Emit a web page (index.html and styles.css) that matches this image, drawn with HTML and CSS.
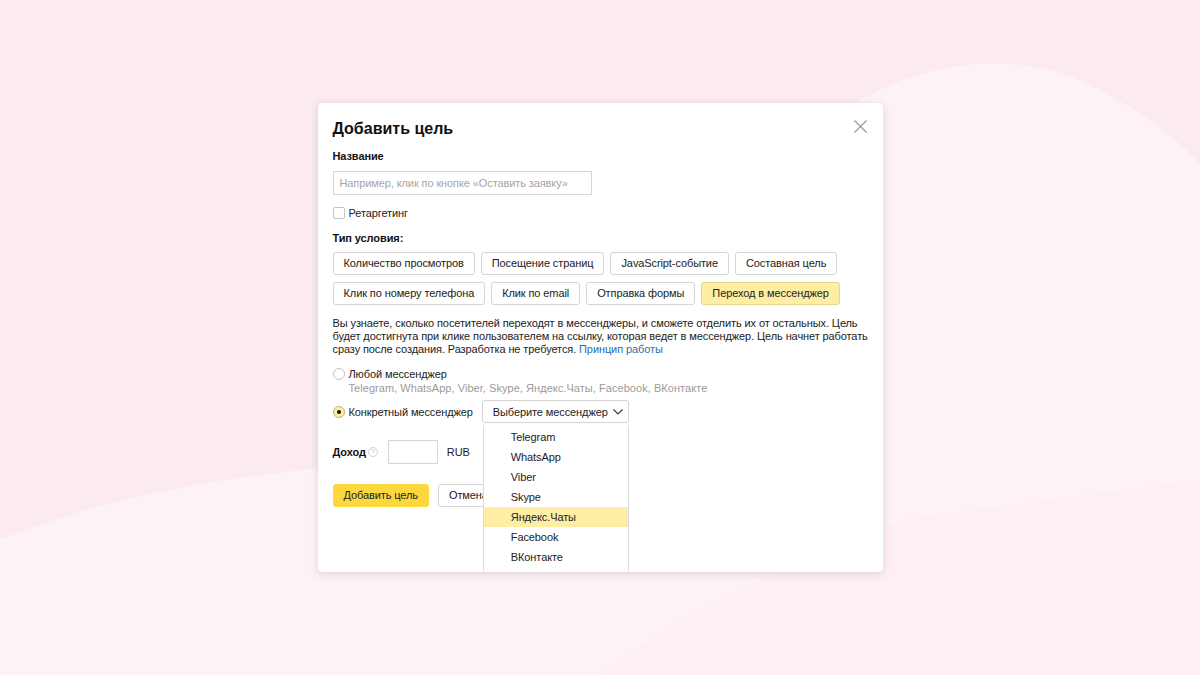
FILE: index.html
```html
<!DOCTYPE html>
<html lang="ru">
<head>
<meta charset="utf-8">
<title>Добавить цель</title>
<link rel="stylesheet" href="styles.css">
</head>
<body>
<svg class="bg" width="1200" height="675" viewBox="0 0 1200 675" xmlns="http://www.w3.org/2000/svg" aria-hidden="true">
  <rect width="1200" height="675" fill="#fbeaef"/>
  <path d="M0 540 C 120 490, 260 470, 420 460 L 1200 460 L 1200 675 L 0 675 Z" fill="#fdf2f5"/>
  <path d="M860 100 C 930 60, 1020 50, 1090 85 C 1140 110, 1180 140, 1200 165 L 1200 675 L 860 675 Z" fill="#fdf2f5"/>
  <path d="M600 675 C 700 600, 800 560, 900 520 L 1200 480 L 1200 675 Z" fill="#fdeff3"/>
</svg>
<div class="page">
  <div class="modal">
    <div class="head">
      <h1 class="title">Добавить цель</h1>
      <button class="close" aria-label="Закрыть">
        <svg width="13" height="13" viewBox="0 0 13 13"><path d="M0.5 0.5 L12.5 12.5 M12.5 0.5 L0.5 12.5" stroke="#9a9a9a" stroke-width="1.3" fill="none"/></svg>
      </button>
    </div>

    <div class="label name-label">Название</div>
    <div class="input name-input">Например, клик по кнопке «Оставить заявку»</div>

    <label class="check-row"><span class="checkbox"></span>Ретаргетинг</label>

    <div class="label type-label">Тип условия:</div>
    <div class="chips">
      <span class="chip">Количество просмотров</span>
      <span class="chip">Посещение страниц</span>
      <span class="chip">JavaScript-событие</span>
      <span class="chip">Составная цель</span>
    </div>
    <div class="chips">
      <span class="chip">Клик по номеру телефона</span>
      <span class="chip">Клик по email</span>
      <span class="chip">Отправка формы</span>
      <span class="chip chip-active">Переход в мессенджер</span>
    </div>

    <p class="desc">Вы узнаете, сколько посетителей переходят в мессенджеры, и сможете отделить их от остальных. Цель будет достигнута при клике пользователем на ссылку, которая ведет в мессенджер. Цель начнет работать сразу после создания. Разработка не требуется. <a class="link">Принцип работы</a></p>

    <div class="radio-row">
      <span class="radio"></span>
      <div>
        <div>Любой мессенджер</div>
        <div class="hint">Telegram, WhatsApp, Viber, Skype, Яндекс.Чаты, Facebook, ВКонтакте</div>
      </div>
    </div>
    <div class="radio-row radio-row2">
      <span class="radio radio-on"></span>
      <span class="radio-text">Конкретный мессенджер</span>
      <div class="select-wrap">
        <span class="select"><span>Выберите мессенджер</span>
          <svg class="chev" width="10" height="6" viewBox="0 0 10 6"><path d="M0.5 0.5 L5 5 L9.5 0.5" stroke="#333" stroke-width="1.1" fill="none"/></svg>
        </span>
        <ul class="menu">
          <li>Telegram</li>
          <li>WhatsApp</li>
          <li>Viber</li>
          <li>Skype</li>
          <li class="hover">Яндекс.Чаты</li>
          <li>Facebook</li>
          <li>ВКонтакте</li>
        </ul>
      </div>
    </div>

    <div class="income">
      <span class="label inline">Доход</span>
      <span class="q">?</span>
      <span class="input small-input"></span>
      <span class="cur">RUB</span>
    </div>

    <div class="actions">
      <span class="btn btn-yellow">Добавить цель</span>
      <span class="btn">Отмена</span>
    </div>
  </div>
</div>
</body>
</html>
```

FILE: styles.css
```css
* { box-sizing: border-box; }
html, body { margin: 0; padding: 0; }
body {
  width: 1200px;
  height: 675px;
  overflow: hidden;
  font-family: "Liberation Sans", Arial, sans-serif;
  font-size: 11px;
  letter-spacing: -0.1px;
  color: #222;
  background: #fbeaef;
}
.bg { position: absolute; left: 0; top: 0; z-index: 0; }
.page {
  position: relative;
  z-index: 1;
  height: 675px;
  display: flex;
  align-items: center;
  justify-content: center;
}
.modal {
  width: 565px;
  height: 469px;
  background: #fff;
  border-radius: 4px;
  box-shadow: 0 2px 10px rgba(0,0,0,0.12), 0 0 1px rgba(0,0,0,0.1);
  padding: 15px 16px 0 15px;
}
.head { display: flex; justify-content: space-between; align-items: flex-start; }
.title {
  margin: 0;
  font-size: 16px;
  font-weight: bold;
  color: #111;
  line-height: 21px;
  letter-spacing: 0;
}
.close {
  border: 0; background: none; padding: 0; margin: 2px 0 0 0;
  width: 13px; height: 13px; display: block;
}
.close svg { display: block; }
.label { font-weight: bold; color: #111; font-size: 11px; line-height: 13px; }
.name-label { margin-top: 11px; }
.input {
  border: 1px solid #d6d6d6;
  height: 24px;
  line-height: 22px;
  padding: 0 6px;
  color: #a6a6a6;
  white-space: nowrap;
}
.name-input { width: 259px; margin-top: 8px; }
.check-row { display: flex; align-items: center; gap: 4px; margin-top: 11px; line-height: 14px; color: #222; }
.checkbox { width: 12px; height: 12px; border: 1px solid #c4c4c4; border-radius: 2px; display: inline-block; }
.type-label { margin-top: 12px; }
.chips { display: flex; gap: 6px; margin-top: 7px; }
.chip {
  border: 1px solid #d5d5d5;
  border-radius: 3px;
  height: 23px;
  line-height: 21px;
  padding: 0 10px;
  color: #222;
  white-space: nowrap;
}
.chip-active { background: #fdeea3; border-color: #e5d48a; }
.desc {
  margin: 12px 0 0 0;
  line-height: 13px;
  color: #222;
  font-size: 11px;
  width: 540px;
}
.link { color: #2f6cb0; }
.radio-row { display: flex; align-items: flex-start; gap: 4px; margin-top: 11px; line-height: 14px; }
.radio {
  width: 12px; height: 12px; border-radius: 50%;
  border: 1px solid #c3c3c3; display: inline-block; margin-top: 1px; flex: none;
}
.radio-on { background: #fdeea3; border-color: #c9b36a; position: relative; }
.radio-on::after {
  content: ""; position: absolute; left: 3px; top: 3px; width: 4px; height: 4px; border-radius: 50%; background: #111;
}
.hint { color: #9b9b9b; letter-spacing: 0.05px; }
.radio-row2 { align-items: center; margin-top: 5px; }
.radio-row2 .radio { margin-top: 0; }
.radio-text { margin-right: 5px; }
.select-wrap { position: relative; }
.select {
  display: inline-flex; align-items: center; gap: 5px;
  height: 23px; border: 1px solid #d5d5d5; border-radius: 3px;
  padding: 0 8px 0 10px; color: #222; white-space: nowrap; width: 147px;
}
.chev { flex: none; display: block; }
.menu {
  position: absolute; left: 1px; top: 25px; z-index: 5;
  margin: 0; padding: 2px 0 0 0; list-style: none;
  width: 146px; height: 146px;
  background: #fff;
  border: 1px solid #dcdcdc; border-top: 0; border-bottom: 0;
}
.menu li { height: 20px; line-height: 20px; padding-left: 27px; color: #222; }
.menu li.hover { background: #fdeea3; }
.income { display: flex; align-items: center; margin-top: 17px; }
.inline { display: inline-block; }
.q {
  width: 10px; height: 10px; border: 1px solid #cfcfcf; border-radius: 50%;
  font-size: 7px; line-height: 8px; text-align: center; color: #bbb; margin-left: 2px; letter-spacing: 0;
}
.small-input { width: 50px; height: 24px; margin-left: 10px; }
.cur { margin-left: 9px; color: #222; }
.actions { display: flex; gap: 9px; margin-top: 20px; }
.btn {
  height: 23px; line-height: 21px; padding: 0 10px;
  border: 1px solid #d5d5d5; border-radius: 3px; color: #222;
}
.btn-yellow { background: #fcd83e; border-color: #fcd83e; }
```
